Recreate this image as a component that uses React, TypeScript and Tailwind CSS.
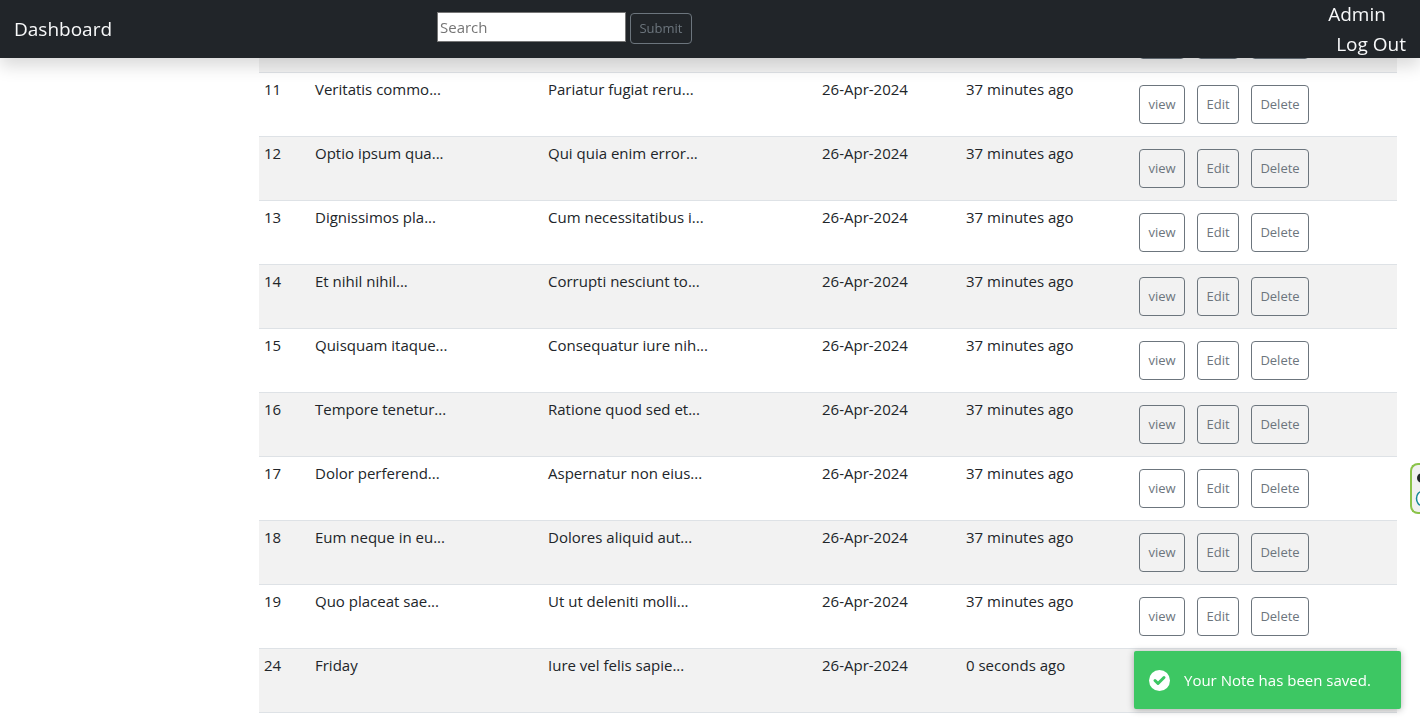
type Note = { id: number; title: string; body: string; age: string; covered?: boolean };

const notes: Note[] = [
  { id: 11, title: "Veritatis commo...", body: "Pariatur fugiat reru...", age: "37 minutes ago" },
  { id: 12, title: "Optio ipsum qua...", body: "Qui quia enim error...", age: "37 minutes ago" },
  { id: 13, title: "Dignissimos pla...", body: "Cum necessitatibus i...", age: "37 minutes ago" },
  { id: 14, title: "Et nihil nihil...", body: "Corrupti nesciunt to...", age: "37 minutes ago" },
  { id: 15, title: "Quisquam itaque...", body: "Consequatur iure nih...", age: "37 minutes ago" },
  { id: 16, title: "Tempore tenetur...", body: "Ratione quod sed et...", age: "37 minutes ago" },
  { id: 17, title: "Dolor perferend...", body: "Aspernatur non eius...", age: "37 minutes ago" },
  { id: 18, title: "Eum neque in eu...", body: "Dolores aliquid aut...", age: "37 minutes ago" },
  { id: 19, title: "Quo placeat sae...", body: "Ut ut deleniti molli...", age: "37 minutes ago" },
  { id: 24, title: "Friday", body: "Iure vel felis sapie...", age: "0 seconds ago", covered: true },
];

const actionClass =
  "h-[39px] rounded border border-[#6c757d] text-[13px] text-[#6c757d]";

function Actions() {
  return (
    <div className="flex gap-3 py-2">
      <button type="button" className={`${actionClass} w-[46px]`}>view</button>
      <button type="button" className={`${actionClass} w-[42px]`}>Edit</button>
      <button type="button" className={`${actionClass} w-[58px]`}>Delete</button>
    </div>
  );
}

function Navbar() {
  return (
    <nav className="fixed inset-x-0 top-0 z-10 flex h-[58px] items-center justify-between bg-[#212529] text-[#f8f9fa] shadow-[0_8px_16px_rgba(0,0,0,0.15)]">
      <a href="#" className="w-[437px] pl-3.5 text-[19px] font-medium">Dashboard</a>
      <form className="flex flex-1 items-center gap-1 pb-0.5" onSubmit={(e) => e.preventDefault()}>
        <input
          type="search"
          aria-label="Search"
          placeholder="Search"
          className="mb-0.5 h-[30px] w-[189px] border border-[#767676] bg-white px-0.5 text-[15px] text-black placeholder:text-[#757575]"
        />
        <button type="submit" className="h-[31px] w-[62px] rounded border border-[#6c757d] text-[13px] text-[#6c757d]">
          Submit
        </button>
      </form>
      <div className="flex flex-col pr-3.5 text-[19px] leading-[30px] font-medium">
        <a href="#">Admin</a>
        <a href="#" className="pl-2">Log Out</a>
      </div>
    </nav>
  );
}

function ChatTab() {
  return (
    <button
      type="button"
      aria-label="Open widget"
      className="fixed top-[463px] right-0 h-[51px] w-2.5 overflow-hidden rounded-l-lg border-2 border-r-0 border-[#8bc34a] bg-[#f1f1f1]"
    >
      <svg viewBox="0 0 8 47" className="h-[47px] w-2" aria-hidden="true">
        <circle cx="10" cy="13" r="5" fill="#212529" />
        <ellipse cx="10" cy="33.500" rx="5.500" ry="7" fill="#fff" stroke="#168a98" strokeWidth="1.500" />
      </svg>
    </button>
  );
}

function Toast() {
  return (
    <div
      role="status"
      className="fixed right-[19px] bottom-3.5 flex h-[58px] w-[267px] items-center gap-3.5 rounded-xs bg-[#3dc763] pl-[15px] text-[15px] font-medium text-white shadow-[0_1px_7px_rgba(0,0,0,0.3)]"
    >
      <svg viewBox="0 0 21 21" className="size-[21px] shrink-0" aria-hidden="true">
        <circle cx="10.500" cy="10.500" r="10.500" fill="#fff" />
        <path d="M6 10.500 9 13.500 15 7.500" fill="none" stroke="#3dc763" strokeWidth="3" strokeLinejoin="round" strokeLinecap="round" />
      </svg>
      <span className="whitespace-nowrap">Your Note has been saved.</span>
    </div>
  );
}

export default function App() {
  return (
    <div className="bg-white font-['Open_Sans','Noto_Sans',sans-serif] text-[15px] leading-6 text-[#212529]">
      <Navbar />
      <main className="pt-2 pr-[23px] pb-2.5 pl-[259px]">
        <table className="w-full table-fixed border-collapse">
          <colgroup>
            <col className="w-[51px]" />
            <col className="w-[233px]" />
            <col className="w-[274px]" />
            <col className="w-36" />
            <col className="w-[173px]" />
            <col />
          </colgroup>
          <tbody>
            <tr className="h-16 border-b border-[#dee2e6] bg-[#f2f2f2]">
              <td colSpan={5} />
              <td className="px-[5px] py-1 align-top"><Actions /></td>
            </tr>
            {notes.map((note) => (
              <tr key={note.id} className="h-16 border-b border-[#dee2e6] even:bg-white odd:bg-[#f2f2f2]">
                <td className="px-[5px] py-1 align-top">{note.id}</td>
                <td className="px-[5px] py-1 align-top whitespace-nowrap">{note.title}</td>
                <td className="px-[5px] py-1 align-top whitespace-nowrap">{note.body}</td>
                <td className="px-[5px] py-1 align-top whitespace-nowrap">26-Apr-2024</td>
                <td className="px-[5px] py-1 align-top whitespace-nowrap">{note.age}</td>
                <td className="px-[5px] py-1 align-top">{!note.covered && <Actions />}</td>
              </tr>
            ))}
          </tbody>
        </table>
      </main>
      <ChatTab />
      <Toast />
    </div>
  );
}
